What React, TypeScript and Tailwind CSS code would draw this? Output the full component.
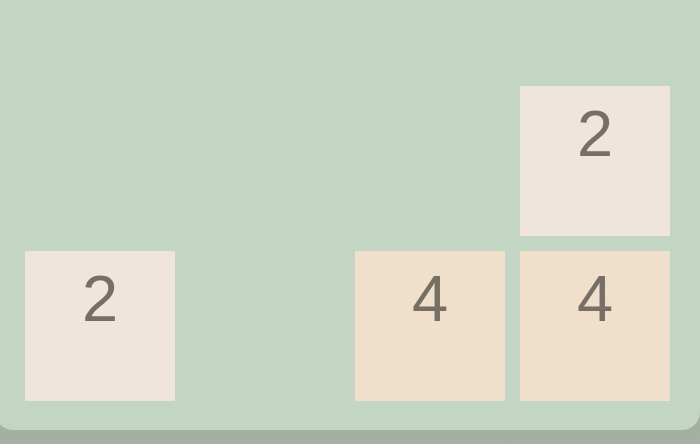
const tiles: (number | null)[] = [null, null, null, 2, 2, null, 4, 4]

const tileBg: Record<number, string> = {
  2: "bg-[#efe5dc]",
  4: "bg-[#f0e0cb]",
}

export default function App() {
  return (
    <div className="h-[444px] w-[700px] overflow-hidden bg-gradient-to-b from-[#97a696] to-[#a4b0a2]">
      <div className="-ml-[5px] h-[430px] w-[705px] rounded-b-[18px] bg-[#c3d5c3] px-[30px] pt-[86px]">
        <div className="grid grid-cols-4 grid-rows-2 gap-[15px]">
          {tiles.map((value, i) =>
            value ? (
              <div
                key={i}
                className={`flex h-[150px] w-[150px] justify-center pt-[15px] ${tileBg[value]}`}
              >
                <span className="font-['Liberation_Sans',sans-serif] text-[65px] leading-none text-[#776e65]">
                  {value}
                </span>
              </div>
            ) : (
              <div key={i} className="h-[150px] w-[150px]" />
            )
          )}
        </div>
      </div>
    </div>
  )
}
